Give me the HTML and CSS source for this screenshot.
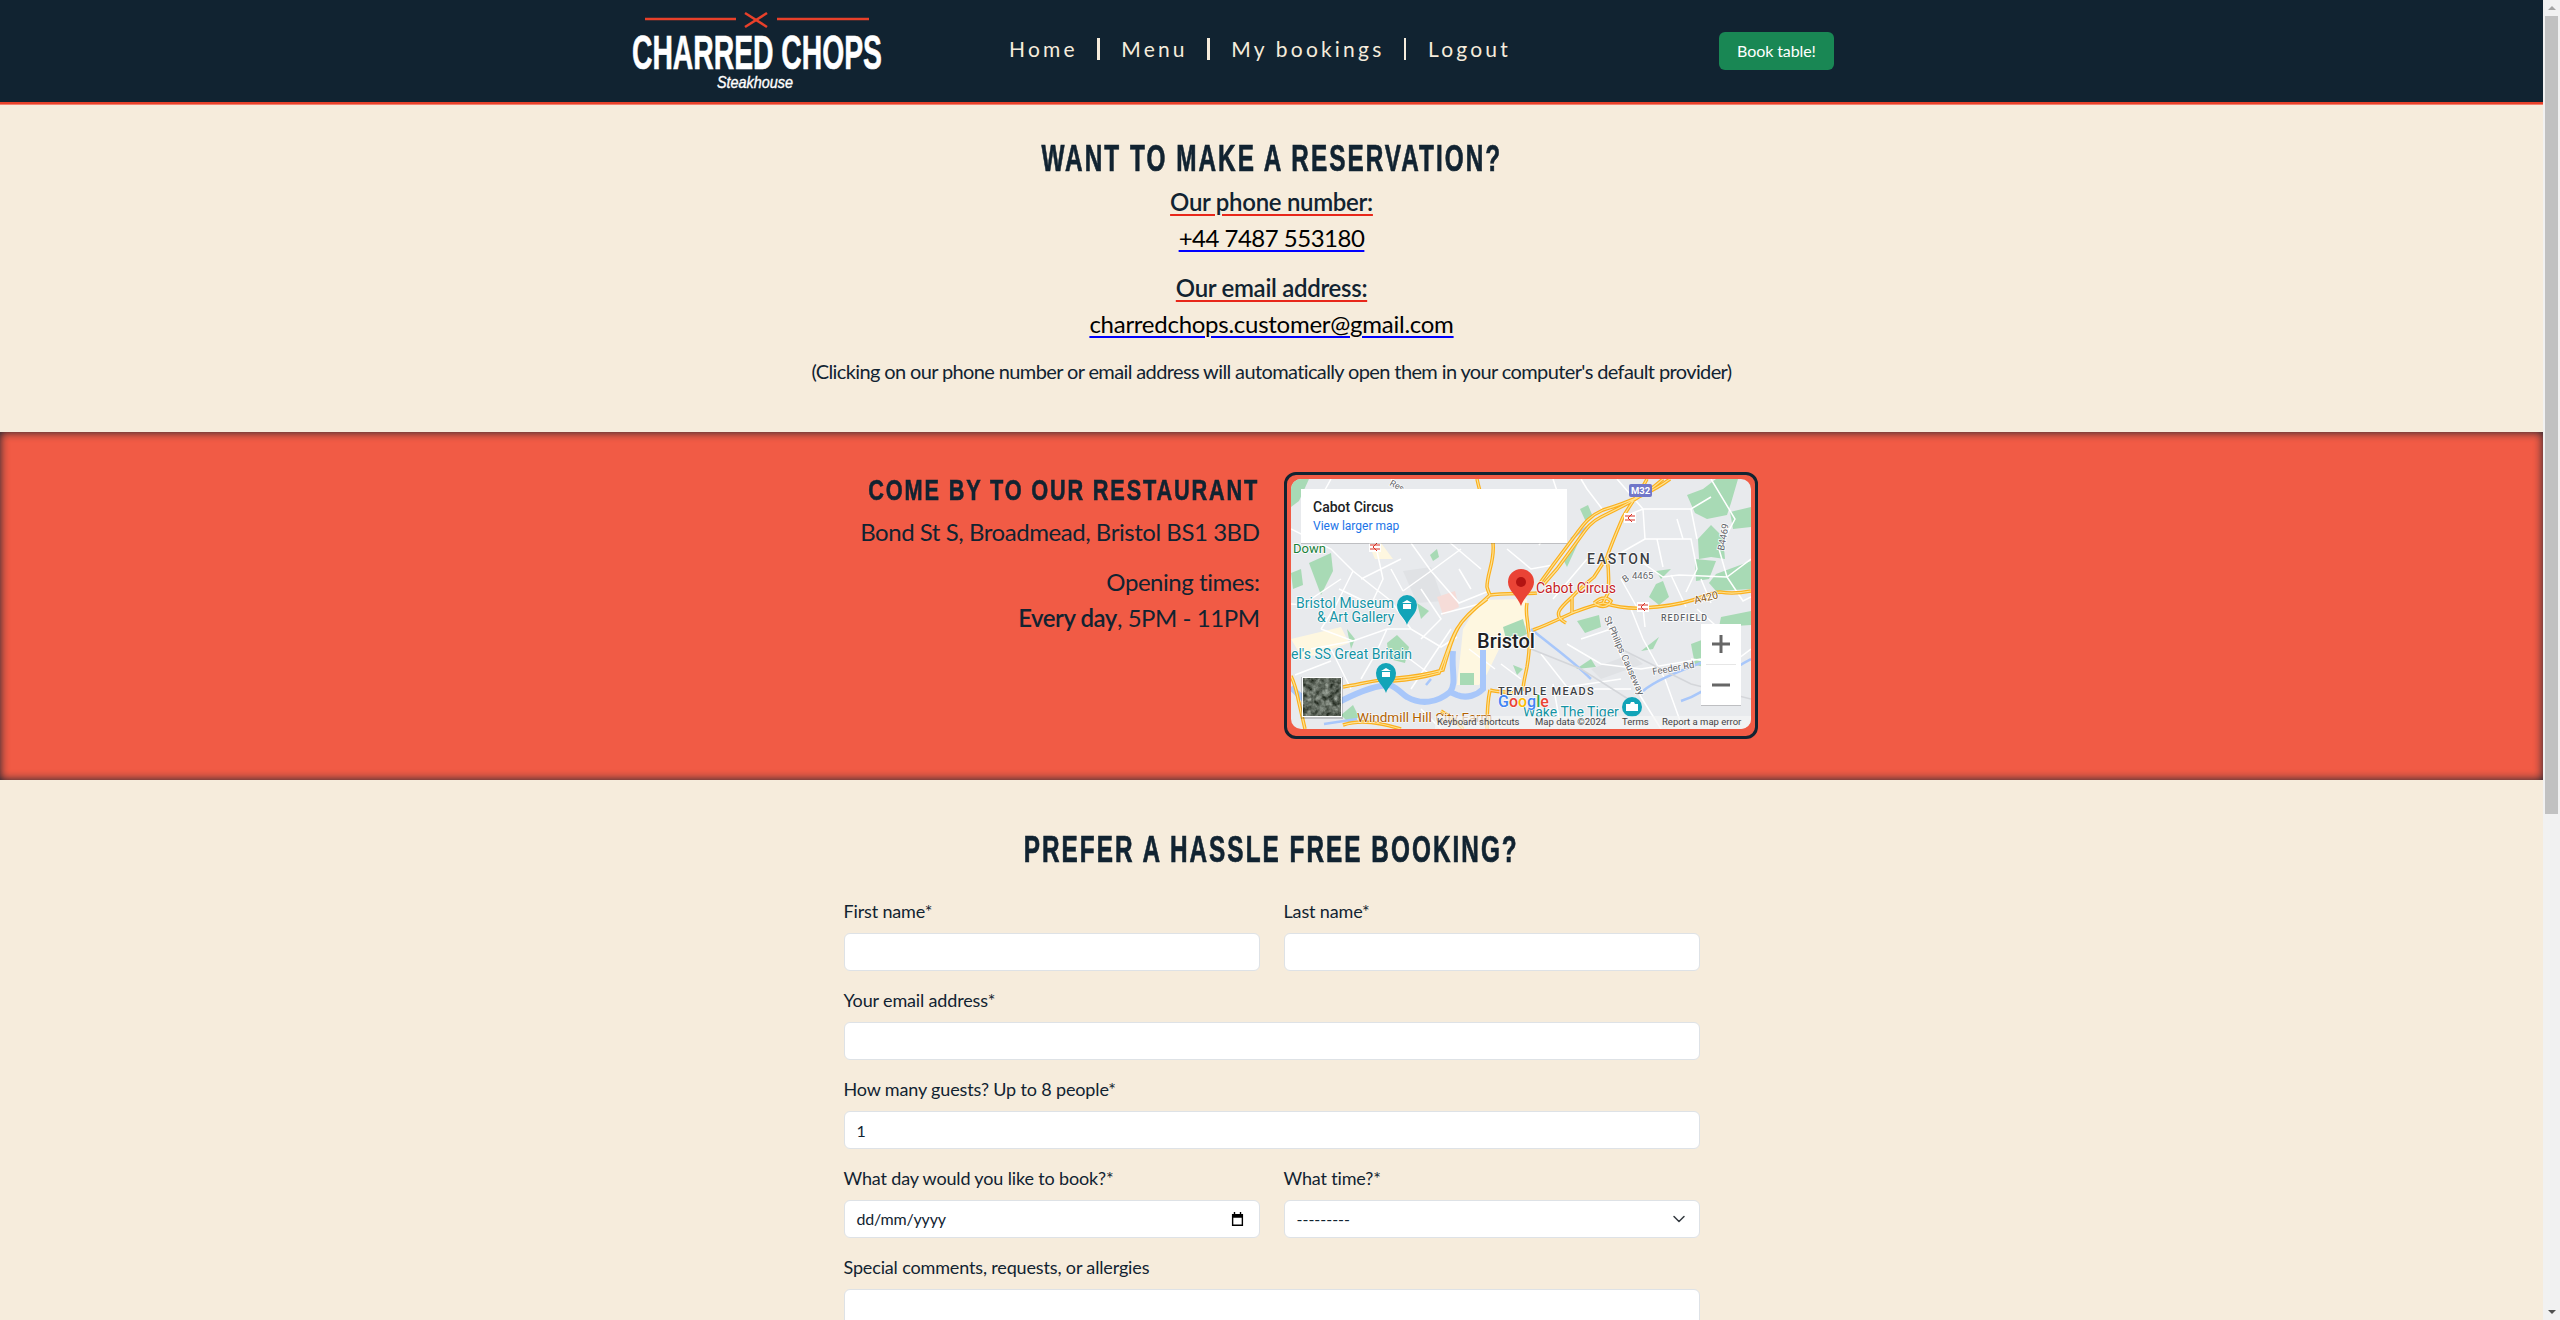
FILE: index.html
```html
<!DOCTYPE html>
<html lang="en">
<head>
<meta charset="utf-8">
<title>Charred Chops Steakhouse</title>
<link rel="stylesheet" href="styles.css">
</head>
<body>
<div class="page">
  <header class="site-header">
    <div class="header-inner">
      <svg class="logo" viewBox="0 0 250 78" width="250" height="78" role="img" aria-label="Charred Chops Steakhouse">
        <line class="logo-red" x1="13" y1="7" x2="104" y2="7"/>
        <line class="logo-red" x1="145" y1="7" x2="237" y2="7"/>
        <line class="logo-red" x1="113" y1="1" x2="135" y2="15"/>
        <line class="logo-red" x1="135" y1="1" x2="113" y2="15"/>
        <text class="logo-main" x="0" y="57" textLength="250" lengthAdjust="spacingAndGlyphs">CHARRED CHOPS</text>
        <text class="logo-sub" x="85" y="76" textLength="76" lengthAdjust="spacingAndGlyphs">Steakhouse</text>
      </svg>
      <nav class="main-nav">
        <a class="nav-link" href="#">Home</a><span class="nav-sep"></span>
        <a class="nav-link" href="#">Menu</a><span class="nav-sep"></span>
        <a class="nav-link" href="#">My bookings</a><span class="nav-sep"></span>
        <a class="nav-link" href="#">Logout</a>
      </nav>
      <a class="book-btn" href="#">Book table!</a>
    </div>
  </header>

  <main>
    <section class="contact">
      <h1 class="title"><span class="title-inner">WANT TO MAKE A RESERVATION?</span></h1>
      <div class="contact-block">
        <div class="contact-head">Our phone number:</div>
        <a class="contact-link phone" href="#">+44 7487 553180</a>
      </div>
      <div class="contact-block">
        <div class="contact-head">Our email address:</div>
        <a class="contact-link" href="#">charredchops.customer@gmail.com</a>
      </div>
      <p class="contact-note">(Clicking on our phone number or email address will automatically open them in your computer's default provider)</p>
    </section>

    <section class="visit">
      <div class="visit-row">
        <div class="visit-text">
          <h2 class="visit-title"><span class="visit-title-inner">COME BY TO OUR RESTAURANT</span></h2>
          <p class="visit-address">Bond St S, Broadmead, Bristol BS1 3BD</p>
          <p class="visit-hours">Opening times:<br><strong>Every day</strong>, 5PM - 11PM</p>
        </div>
        <div class="map-frame">
          <svg class="map" viewBox="0 0 460 250" width="460" height="250">
            <defs>
              <path id="motor" d="M379,0 C360,14 335,24 312,31 C298,37 292,46 286,54 L262,86 L249,104 M372,0 C352,18 330,28 310,38 C298,44 294,52 288,60 L266,90 L252,106 M356,0 C350,12 340,24 332,38 C326,52 320,66 316,78 C318,92 318,104 317,114 L312,124 C326,128 340,130 352,129 C370,128 386,126 402,121 C414,117 422,113 429,113 C440,115 450,114 460,112 M186,0 C190,20 200,44 202,64 C204,82 196,94 196,108 C197,112 198,114 199,116 C210,114 232,115 246,114 M199,116 C186,128 176,136 170,144 C162,156 158,170 152,191 C134,196 120,198 106,199 C88,200 70,205 52,208 M196,120 C182,130 172,140 166,150 C158,164 155,178 148,194 C130,199 116,201 102,202 M236,124 C234,134 237,142 237,148 C240,162 238,176 236,188 C234,198 232,204 232,212 M242,151 C256,146 268,140 281,134 C292,130 302,126 312,124 M275,144 C260,136 270,128 281,118 C288,110 296,104 303,98 L316,78 M281,134 L281,118 M303,124 C310,118 316,118 320,122 C316,130 308,128 303,124 M199,211 C196,224 196,238 196,250 M199,211 C208,214 216,212 222,214 M0,197 C4,205 6,214 8,224 L14,250 M150,232 C160,238 168,244 172,250 M52,246 C70,240 90,244 110,250"/>
              <path id="minor" d="M0,50 L40,70 L62,92 L100,122 L120,150 M40,0 L18,40 M100,0 C110,10 125,30 150,56 L190,90 M62,92 L44,128 L30,150 M85,68 L92,100 L78,130 M120,64 L140,92 L168,124 L198,112 M140,92 L112,112 M170,70 L140,92 M0,125 L44,128 M30,150 L62,162 L96,150 L120,150 L150,168 L166,158 M96,150 L84,176 L70,200 M20,170 L62,162 M4,196 L40,182 M116,178 L140,196 M262,0 L272,30 L248,66 M312,31 L296,10 L290,0 M332,38 L352,30 L400,30 L420,18 M352,30 L354,60 L400,60 L406,90 L395,113 M354,60 L326,76 L316,78 M326,0 L352,30 M400,30 L406,60 M352,84 L372,98 L388,96 L436,98 L460,80 M436,98 L452,122 L460,118 M436,98 L428,70 L444,40 L420,0 M340,130 L352,160 L374,200 L392,250 M352,129 L354,148 M316,140 C322,160 335,190 350,218 L370,250 M380,96 L395,128 M400,180 L440,185 L460,170 M276,165 L310,185 L350,190 L410,180 M210,185 L230,200 M250,175 L276,208 L330,200 M262,205 L270,250 M112,112 L100,90 M204,190 L178,170 M192,124 L150,135 M70,100 L110,80 M48,110 L90,130 M20,120 L50,100 M130,110 L150,140 L130,160 M168,90 L180,110 M216,70 L240,90 L262,86 M210,50 L230,64 M296,80 L262,120 M330,100 L348,132 M290,160 L320,150 M296,210 L340,210 M406,130 L440,160 M410,100 L420,124 M366,60 L372,88 M386,40 L392,60 M120,210 L160,150 M60,210 L40,170 M130,230 L150,250"/>
              <filter id="satnoise" x="0" y="0" width="100%" height="100%" color-interpolation-filters="sRGB">
                <feTurbulence type="fractalNoise" baseFrequency="0.18" numOctaves="3" seed="4"/>
                <feColorMatrix type="matrix" values="0.8 0 0 0 -0.02  0.8 0 0 0 0.01  0.8 0 0 0 -0.03  0 0 0 0 1"/>
              </filter>
            </defs>
            <rect class="m-land" width="460" height="250"/>

            <path class="m-park" d="M396,16 L412,10 L425,0 L447,0 L440,24 L436,36 L416,40 L404,34 Z"/>
            <path class="m-park" d="M439,33 L460,28 L460,48 L442,50 Z"/>
            <path class="m-park" d="M407,60 L420,46 L432,58 L434,80 L420,78 L408,80 Z"/>
            <path class="m-park" d="M404,80 L425,82 L418,100 L405,102 Z"/>
            <path class="m-park" d="M425,95 L460,82 L460,110 L425,112 L418,104 Z"/>
            <path class="m-park" d="M365,105 L372,102 L378,118 L368,126 L358,118 Z"/>
            <path class="m-park" d="M365,92 L380,90 L370,100 Z"/>
            <path class="m-park" d="M430,138 L460,132 L460,146 L428,148 Z"/>
            <path class="m-park" d="M289,30 L297,26 L302,38 L295,43 Z"/>
            <path class="m-park" d="M272,80 L288,62 L276,88 Z"/>
            <path class="m-park" d="M286,142 L308,136 L310,148 L294,154 Z"/>
            <path class="m-park" d="M400,165 L424,156 L424,190 L404,186 Z"/>
            <path class="m-park" d="M350,172 L368,158 L362,170 Z"/>
            <path class="m-park" d="M18,84 L40,74 L42,92 L30,116 Z"/>
            <path class="m-park" d="M0,94 L10,90 L12,106 L2,110 Z"/>
            <path class="m-park" d="M0,0 L18,0 L8,22 L0,28 Z"/>
            <path class="m-park" d="M139,76 L146,70 L148,78 L142,82 Z"/>
            <path class="m-park" d="M126,124 L138,132 L130,140 Z"/>
            <path class="m-park" d="M96,164 L106,156 L118,168 L114,184 L98,180 Z"/>
            <path class="m-park" d="M56,150 L64,160 L60,170 Z"/>
            <path class="m-park" d="M50,236 L62,226 L68,238 L58,244 Z"/>
            <path class="m-park" d="M224,134 L230,138 L226,142 Z"/>
            <path class="m-park" d="M222,186 L232,190 L226,196 Z"/>
            <path class="m-park" d="M285,190 L300,180 L305,188 Z"/>
            <path class="m-grey" d="M112,92 L140,88 L152,122 L126,124 Z"/>
            <path class="m-grey" d="M300,190 L340,175 L352,185 L310,200 Z"/>
            <path class="m-pink" d="M146,118 L164,112 L168,128 L152,136 Z"/>
            <path class="m-centre" d="M190,121 L236,120 L236,146 L212,162 L196,195 L188,206 L166,206 L170,170 L172,150 Z"/>
            <path class="m-centre" d="M78,66 L90,64 L102,80 L84,80 Z"/>
            <path class="m-centre" d="M0,160 L50,148 L58,164 L12,180 Z"/>
            <path class="m-park" d="M212,148 L232,140 L236,155 L216,164 Z"/>
            <path class="m-park" d="M169,194 L183,194 L183,206 L169,206 Z"/>

            <use href="#minor" class="m-minor"/>
            <path class="m-water" d="M0,208 C16,226 32,232 52,221 C70,212 85,206 99,206 C108,210 112,216 116,218 C130,226 146,224 159,213 C166,204 160,192 162,172"/>
            <path class="m-water" d="M159,213 L166,216 C176,220 186,216 192,210 L192,171"/>
            <path class="m-water-thin" d="M240,150 C262,168 280,180 300,200 M352,212 C366,200 390,192 420,180 M460,180 C430,195 420,212 390,222 M33,245 L66,240 M135,206 L140,200 M280,60 L296,48"/>
            <path class="m-rail" d="M240,170 L290,190 L345,225 M330,170 L400,205 L460,220"/>

            <use href="#motor" class="m-road-case"/>
            <use href="#motor" class="m-road-fill"/>

            <g class="rail-icon" transform="translate(339,39)"><rect x="-6" y="-5" width="12" height="10"/><path d="M-5,-2 H5 M-5,2 H5 M2,-4 L-2,0 L2,4"/></g>
            <g class="rail-icon" transform="translate(84,68)"><rect x="-6" y="-5" width="12" height="10"/><path d="M-5,-2 H5 M-5,2 H5 M2,-4 L-2,0 L2,4"/></g>
            <g class="rail-icon" transform="translate(352,128)"><rect x="-6" y="-5" width="12" height="10"/><path d="M-5,-2 H5 M-5,2 H5 M2,-4 L-2,0 L2,4"/></g>

            <text class="t-green" x="2" y="74">Down</text>
            <text class="t-teal" x="5" y="129">Bristol Museum</text>
            <text class="t-teal" x="26" y="143">&amp; Art Gallery</text>
            <text class="t-teal" x="0" y="180">el's SS Great Britain</text>
            <text class="t-teal" x="232" y="238">Wake The Tiger</text>
            <text class="t-orange" x="66" y="243">Windmill Hill City Farm</text>
            <text class="t-city" x="186" y="169">Bristol</text>
            <text class="t-area t-easton" x="296" y="85">EASTON</text>
            <text class="t-area t-small" x="370" y="142">REDFIELD</text>
            <text class="t-area t-temple" x="207" y="216">TEMPLE MEADS</text>
            <text class="t-pinlabel" x="245" y="114">Cabot Circus</text>
            <text class="t-road" transform="translate(334,104) rotate(-35)">B</text>
            <text class="t-road" x="341" y="100">4465</text>
            <text class="t-road t-brown" transform="translate(404,125) rotate(-14)">A420</text>
            <text class="t-road" transform="translate(433,72) rotate(-80)">B4469</text>
            <text class="t-road" transform="translate(362,196) rotate(-10)">Feeder Rd</text>
            <text class="t-road" transform="translate(313,139) rotate(66)">St Philips Causeway</text>
            <text class="t-road t-top" transform="translate(98,6) rotate(28)">Res</text>

            <rect class="m-shield" x="338" y="5" width="23" height="13" rx="2"/>
            <text class="t-shield" x="349.5" y="15">M32</text>

            <path class="m-pin" d="M230,127 C226,116 217,112 217,103 a13,13 0 1 1 26,0 C243,112 234,116 230,127 Z"/>
            <circle class="m-pin-dot" cx="230" cy="103" r="5"/>

            <g transform="translate(116,126)">
              <path class="m-poi" d="M0,20 C-2,13 -10,9 -10,0 a10,10 0 1 1 20,0 C10,9 2,13 0,20 Z"/>
              <path class="m-poi-icon" d="M-5,-2 L0,-5 L5,-2 Z M-4,-1 H4 V4 H-4 Z"/>
            </g>
            <g transform="translate(95,194)">
              <path class="m-poi" d="M0,20 C-2,13 -10,9 -10,0 a10,10 0 1 1 20,0 C10,9 2,13 0,20 Z"/>
              <path class="m-poi-icon" d="M-5,-2 L0,-5 L5,-2 Z M-4,-1 H4 V4 H-4 Z"/>
            </g>
            <g transform="translate(341,228)">
              <circle class="m-poi" r="10"/>
              <path class="m-poi-icon" d="M-6,-3 H-2 L-1,-5 H2 L3,-3 H6 V4 H-6 Z"/>
            </g>

            <text class="t-google" x="207" y="228"><tspan class="g-b">G</tspan><tspan class="g-r">o</tspan><tspan class="g-y">o</tspan><tspan class="g-b">g</tspan><tspan class="g-g">l</tspan><tspan class="g-r">e</tspan></text>

            <rect class="m-footer" x="144" y="237" width="316" height="13"/>
            <text class="t-foot" x="146" y="246">Keyboard shortcuts</text>
            <text class="t-foot" x="244" y="246">Map data ©2024</text>
            <text class="t-foot" x="331" y="246">Terms</text>
            <text class="t-foot" x="371" y="246">Report a map error</text>

            <rect class="m-card-shadow" x="10" y="11" width="266" height="54"/>
            <rect class="m-card" x="10" y="10" width="266" height="54"/>
            <text class="t-card" x="22" y="33">Cabot Circus</text>
            <text class="t-link" x="22" y="51">View larger map</text>

            <rect class="m-card-shadow" x="10" y="198" width="42" height="42"/>
            <rect class="m-thumb-frame" x="11" y="198" width="40" height="40"/>
            <rect class="m-thumb" x="12" y="199" width="38" height="38" filter="url(#satnoise)"/>

            <rect class="m-card-shadow" x="410" y="146" width="40" height="81"/>
            <rect class="m-card" x="410" y="145" width="40" height="81"/>
            <line class="m-sep" x1="415" y1="185.5" x2="445" y2="185.5"/>
            <path class="m-zoomicon" d="M421,163.5 H439 V166.5 H421 Z M428.500,156 H431.500 V174 H428.500 Z M421,204.500 H439 V207.500 H421 Z"/>
          </svg>
        </div>
      </div>
    </section>

    <section class="booking">
      <h2 class="title"><span class="title-inner">PREFER A HASSLE FREE BOOKING?</span></h2>
      <form class="booking-form">
        <div class="field">
          <label class="field-label" for="first">First name*</label>
          <input class="control" id="first" type="text">
        </div>
        <div class="field">
          <label class="field-label" for="last">Last name*</label>
          <input class="control" id="last" type="text">
        </div>
        <div class="field wide">
          <label class="field-label" for="email">Your email address*</label>
          <input class="control" id="email" type="text">
        </div>
        <div class="field wide">
          <label class="field-label" for="guests">How many guests? Up to 8 people*</label>
          <input class="control" id="guests" type="text" value="1">
        </div>
        <div class="field">
          <span class="field-label">What day would you like to book?*</span>
          <div class="control control-row">
            <span class="tight">dd/mm/yyyy</span>
            <svg class="cal-icon" viewBox="0 0 14 16" width="13" height="15"><path d="M3,0 H4.500 V2 H9.500 V0 H11 V2 H13 V15 H1 V2 H3 Z M2.500,6 V13.500 H11.500 V6 Z"/></svg>
          </div>
        </div>
        <div class="field">
          <span class="field-label">What time?*</span>
          <div class="control control-row">
            <span>---------</span>
            <svg class="chev-icon" viewBox="0 0 16 16" width="16" height="16"><path d="M3,5.500 L8,10.500 L13,5.500"/></svg>
          </div>
        </div>
        <div class="field wide">
          <label class="field-label" for="notes">Special comments, requests, or allergies</label>
          <textarea class="control area" id="notes"></textarea>
        </div>
      </form>
    </section>
  </main>
</div>
<aside class="scrollbar" aria-hidden="true">
  <div class="sb-btn"><span class="sb-up"></span></div>
  <div class="sb-track"><div class="sb-thumb"></div></div>
  <div class="sb-btn"><span class="sb-down"></span></div>
</aside>
</body>
</html>
```
FILE: styles.css
```css
* { box-sizing: border-box; }
html, body { margin: 0; height: 1320px; overflow: hidden; }
body {
  display: flex;
  background: #f6ecdc;
  color: #112331;
  font-family: Lato, "Liberation Sans", sans-serif;
  font-size: 16px;
}
.page { flex: 1; min-width: 0; height: 1320px; overflow: hidden; }

/* scrollbar */
.scrollbar { width: 17px; height: 1320px; background: #f1f1f1; display: flex; flex-direction: column; }
.sb-btn { height: 16px; flex: none; display: flex; align-items: center; justify-content: center; }
.sb-track { flex: 1; padding: 0 2px; }
.sb-thumb { height: 798px; background: #c1c1c1; }
.sb-up { width: 0; height: 0; border: 4px solid transparent; border-top: 0; border-bottom: 4px solid #a3a3a3; }
.sb-down { width: 0; height: 0; border: 4px solid transparent; border-bottom: 0; border-top: 4px solid #505050; }

/* header */
.site-header {
  height: 105px;
  background: #112331;
  border-bottom: 1px solid #f4816e;
  box-shadow: inset 0 -2px 0 #e8412a;
}
.header-inner { display: flex; align-items: flex-start; padding-left: 632px; height: 102px; }
.logo { flex: none; margin-top: 12px; overflow: visible; }
.logo-red { stroke: #e8402a; stroke-width: 2.500; }
.logo-main { font-family: "Liberation Sans", sans-serif; font-weight: 700; font-size: 48px; fill: #fff; stroke: #fff; stroke-width: 0.6px; }
.logo-sub { font-family: "Liberation Sans", sans-serif; font-weight: 400; font-style: italic; font-size: 17px; fill: #fff; stroke: #fff; stroke-width: 0.4px; }

.main-nav { display: flex; align-items: center; margin-left: 127px; margin-top: 35px; height: 28px; }
.nav-link { color: #f6ecdc; text-decoration: none; font-size: 21px; letter-spacing: 3.2px; line-height: 28px; }
.nav-sep { width: 2.500px; height: 22px; background: #f6ecdc; margin: 0 21.500px 0 19.500px; }
.book-btn {
  margin-left: 208px;
  margin-top: 32px;
  width: 115px;
  height: 38px;
  padding-bottom: 1px;
  display: flex; align-items: center; justify-content: center;
  background: #198754;
  color: #fff;
  text-decoration: none;
  border-radius: 6px;
  font-size: 16px;
  letter-spacing: -0.1px;
}

/* section titles */
.title {
  margin: 0;
  text-align: center;
  font-family: "Liberation Sans", sans-serif;
  font-weight: 700;
  font-size: 36px;
  line-height: 44px;
  letter-spacing: 3px;
  color: #112331;
  -webkit-text-stroke: 0.7px #112331;
}
.title-inner { display: inline-block; white-space: nowrap; transform: scaleX(.676); }

/* contact */
.contact { height: 327px; padding-top: 32px; text-align: center; }
.contact-block { margin-top: 3px; margin-bottom: 14px; display: flex; flex-direction: column; align-items: center; }
.contact-head {
  font-size: 24px; line-height: 36px; font-weight: 600; letter-spacing: -0.3px;
  text-decoration: underline #e8271a 2px;
  text-underline-offset: 3px;
}
.contact-link {
  font-size: 24px; line-height: 36px; color: #000; letter-spacing: -0.26px;
  text-decoration: underline #0000ff 2px;
  text-underline-offset: 3px;
}
.phone { letter-spacing: -0.5px; }
.contact-note { margin: 13px 0 0; font-size: 20px; line-height: 30px; letter-spacing: -0.62px; }

/* visit band */
.visit {
  background: #f15b45;
  height: 348px;
  padding-top: 40px;
  box-shadow: inset 0 0 10px #112331;
}
.visit-row { width: 856px; margin: 0 auto; display: flex; gap: 24px; }
.visit-text { width: 416px; flex: none; text-align: right; }
.visit-title {
  margin: 0 0 6px;
  display: flex;
  justify-content: flex-end;
  font-family: "Liberation Sans", sans-serif;
  font-weight: 700;
  font-size: 30px;
  line-height: 36px;
  letter-spacing: 2.5px;
  white-space: nowrap;
  -webkit-text-stroke: 0.6px #112331;
}
.visit-title-inner { flex: none; transform: scaleX(.725); transform-origin: right center; }
.visit-address, .visit-hours { margin: 0 0 14px; font-size: 24px; line-height: 36px; letter-spacing: -0.45px; }
.visit-hours strong { font-weight: 600; }
.map-frame { flex: none; border: 3px solid #112331; border-radius: 12px; padding: 4px; height: 267px; width: 474px; }
.map { display: block; border-radius: 10px; }

/* map */
.m-land { fill: #e8eaed; }
.m-park { fill: #a8dab5; }
.m-grey { fill: #e0e2e5; }
.m-pink { fill: #f6dcd8; }
.m-centre { fill: #fef7e0; }
.m-minor { fill: none; stroke: #fff; stroke-width: 1.500; }
.m-water { fill: none; stroke: #a8c7fa; stroke-width: 6; }
.m-water-thin { fill: none; stroke: #a8c7fa; stroke-width: 2.500; }
.m-rail { fill: none; stroke: #d4d6da; stroke-width: 1.500; }
.m-road-case { fill: none; stroke: #fbb01e; stroke-width: 3.500; }
.m-road-fill { fill: none; stroke: #fde293; stroke-width: 1.200; }
.rail-icon rect { fill: #fff; }
.rail-icon path { fill: none; stroke: #d93025; stroke-width: 1; }
.m-shield { fill: #7177c9; }
.t-shield { font: 700 9.500px Roboto, sans-serif; fill: #fff; text-anchor: middle; }
.m-pin { fill: #ea4335; }
.m-pin-dot { fill: #b31412; }
.m-poi { fill: #12a4b8; }
.m-poi-icon { fill: #fff; }
.m-footer { fill: rgba(245, 245, 245, .7); }
.m-card { fill: #fff; }
.m-card-shadow { fill: rgba(0, 0, 0, .18); }
.m-thumb-frame { fill: #fff; }
.m-sep { stroke: #e6e6e6; stroke-width: 1; }
.m-zoomicon { fill: #666; }

.map text { font-family: Roboto, sans-serif; }
.t-green { font-size: 13px; fill: #188038; paint-order: stroke; stroke: #fff; stroke-width: 1.500px; }
.t-teal { font-size: 14px; fill: #1493a4; paint-order: stroke; stroke: #fff; stroke-width: 1.500px; }
.t-orange { font-size: 13.500px; fill: #b06000; paint-order: stroke; stroke: #fff; stroke-width: 1px; }
.t-city { font-size: 20px; font-weight: 500; fill: #202124; paint-order: stroke; stroke: #fff; stroke-width: 2px; }
.t-area { fill: #3c4043; font-weight: 500; paint-order: stroke; stroke: #fff; stroke-width: 1.500px; }
.t-easton { font-size: 14px; letter-spacing: 1.800px; }
.t-small { font-size: 8.800px; letter-spacing: 1px; fill: #5f6368; }
.t-temple { font-size: 11px; letter-spacing: 1.300px; }
.t-pinlabel { font-size: 14px; fill: #c5221f; paint-order: stroke; stroke: #fff; stroke-width: 1.500px; }
.t-road { font-size: 9.500px; fill: #5f6368; paint-order: stroke; stroke: #fff; stroke-width: 1.500px; }
.t-brown { fill: #8a5a14; font-size: 10.500px; }
.t-top { font-size: 9px; }
.t-google { font-size: 16px; font-weight: 500; paint-order: stroke; stroke: #fff; stroke-width: 1px; }
.g-b { fill: #4285f4; }
.g-r { fill: #ea4335; }
.g-y { fill: #fbbc05; }
.g-g { fill: #34a853; }
.t-foot { font-size: 9.500px; fill: #444; }
.t-card { font-size: 14px; font-weight: 500; fill: #202124; }
.t-link { font-size: 12px; fill: #1a73e8; }

/* booking */
.booking { padding-top: 48px; }
.booking-form {
  width: 856px;
  margin: 26px auto 0;
  display: grid;
  grid-template-columns: 416px 416px;
  column-gap: 24px;
  row-gap: 16px;
}
.field { display: flex; flex-direction: column; min-width: 0; }
.wide { grid-column: 1 / -1; }
.field-label { font-size: 18px; line-height: 27px; margin-bottom: 8px; color: #112331; letter-spacing: -0.15px; }
.control {
  height: 38px;
  width: 100%;
  border: 1px solid #dee2e6;
  border-radius: 6px;
  background: #fff;
  padding: 6px 12px;
  font: 16px/24px Lato, sans-serif;
  color: #112331;
  outline: none;
  display: block;
}
.control-row { display: flex; align-items: center; justify-content: space-between; }
.tight { letter-spacing: -0.2px; }
.cal-icon { fill: #000; margin-right: 3px; }
.chev-icon { fill: none; stroke: #343a40; stroke-width: 1.500; stroke-linecap: round; stroke-linejoin: round; }
.area { height: 120px; resize: none; }
```
